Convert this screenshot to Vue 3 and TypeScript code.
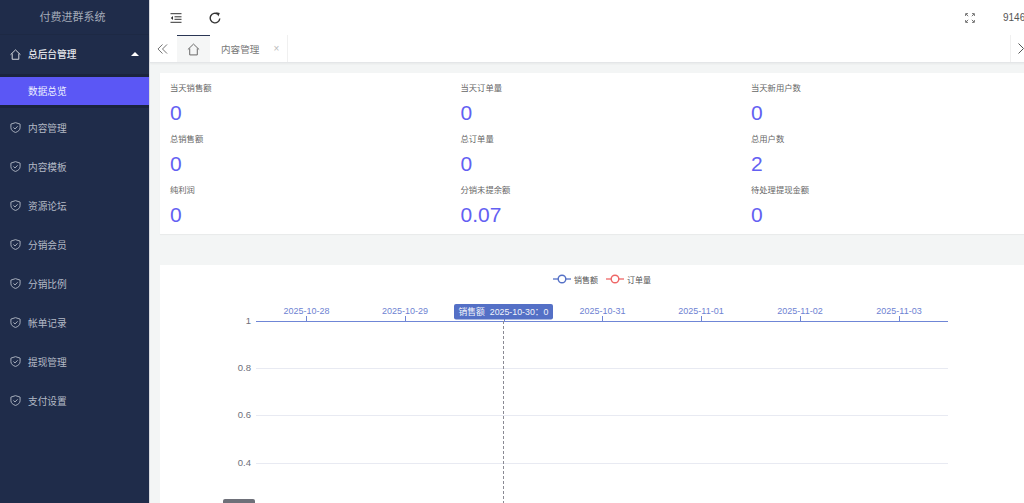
<script setup lang="ts">
interface Stat { label: string; value: string }
const menus: string[] = ['内容管理', '内容模板', '资源论坛', '分销会员', '分销比例', '帐单记录', '提现管理', '支付设置']
const stats: Stat[] = [
  { label: '当天销售额', value: '0' }, { label: '当天订单量', value: '0' }, { label: '当天新用户数', value: '0' },
  { label: '总销售额', value: '0' }, { label: '总订单量', value: '0' }, { label: '总用户数', value: '2' },
  { label: '纯利润', value: '0' }, { label: '分销未提余额', value: '0.07' }, { label: '待处理提现金额', value: '0' }
]
const dates: { x: number; t: string }[] = [
  { x: 146.5, t: '2025-10-28' }, { x: 245, t: '2025-10-29' }, { x: 442.5, t: '2025-10-31' },
  { x: 541, t: '2025-11-01' }, { x: 640, t: '2025-11-02' }, { x: 739, t: '2025-11-03' }
]
const ticks: number[] = [146.5, 245.5, 344.5, 442.5, 541.5, 640.5, 739.5]
const yAxis: { y: number; t: string }[] = [
  { y: 103.5, t: '0.8' }, { y: 150.5, t: '0.6' }, { y: 198.5, t: '0.4' }
]
</script>

<template>
  <div class="app">
    <aside class="side">
      <div class="logo">付费进群系统</div>
      <div class="group">
        <svg class="ico" viewBox="0 0 12 12"><path d="M.6 6.200 6 1 11.400 6.200M2.400 5v6.200h7.200V5" /></svg>
        <span>总后台管理</span>
        <i class="caret"></i>
      </div>
      <div class="subwrap"><div class="sub">数据总览</div></div>
      <div v-for="m in menus" :key="m" class="item">
        <svg class="ico" viewBox="0 0 12 12"><path d="M6 .7 11 2.300v3.900c0 2.600-2.200 4.300-5 5.200C3.200 10.500 1 8.800 1 6.200V2.300Z" /><path d="M3.800 6 5.500 7.600 8.300 4.700" /></svg>
        <span>{{ m }}</span>
      </div>
    </aside>
    <main class="main">
      <header class="top">
        <svg class="hicon first" viewBox="0 0 12 10"><path d="M.5 .7h11M4.500 3.800h7M4.500 6.300h7M.5 9.300h11" /><path d="M3 3 .8 5 3 7Z" class="fill" /></svg>
        <svg class="hicon second" viewBox="0 0 12 12"><path d="M10.800 6.500A4.800 4.800 0 1 1 8.900 2.200" /><path d="M7.200 .2 10.800 1 9.400 4.500Z" class="fill" /></svg>
        <svg class="hicon third" viewBox="0 0 10 10"><path d="M.6 3V.6H3M7 .6h2.400V3M.6 7v2.400H3M7 9.400h2.400V7M1 1l2.200 2.200M9 1 6.800 3.200M1 9l2.200-2.200M9 9 6.800 6.800" /></svg>
        <span class="num">9146</span>
      </header>
      <nav class="tabs">
        <svg class="dbl" viewBox="0 0 12 11"><path d="M6 .5 1 5.500 6 10.500M11 .5 6 5.500 11 10.500" /></svg>
        <div class="home">
          <svg class="homeico" viewBox="0 0 12 12"><path d="M.8 6 6 1 11.200 6M2.500 5v6h7V5" /></svg>
        </div>
        <div class="tab"><span>内容管理</span><em>×</em></div>
        <div class="tail">
          <svg class="chev" viewBox="0 0 6 11"><path d="M.5 .5 5.500 5.500 .5 10.500" /></svg>
        </div>
      </nav>
      <section class="content">
        <div class="card stats">
          <div v-for="s in stats" :key="s.label" class="stat">
            <div class="lab">{{ s.label }}</div>
            <div class="val">{{ s.value }}</div>
          </div>
        </div>
        <div class="card chart">
          <div class="legend">
            <svg class="lg" viewBox="0 0 18 10"><path d="M0 5h18" stroke="#5470c6" stroke-width="1.300" /><circle cx="9" cy="5" r="3.800" stroke="#5470c6" fill="#fff" stroke-width="1.400" /></svg>
            <span>销售额</span>
            <svg class="lg" viewBox="0 0 18 10"><path d="M0 5h18" stroke="#ee6666" stroke-width="1.300" /><circle cx="9" cy="5" r="3.800" stroke="#ee6666" fill="#fff" stroke-width="1.400" /></svg>
            <span>订单量</span>
          </div>
          <svg class="plot" width="875" height="238" viewBox="0 0 875 238">
            <line v-for="g in yAxis" :key="g.t" x1="96" x2="788" :y1="g.y" :y2="g.y" stroke="#e8eaf2" />
            <line x1="96" x2="788" y1="56.500" y2="56.500" stroke="#6f86d6" />
            <line v-for="t in ticks" :key="t" :x1="t" :x2="t" y1="51" y2="56" stroke="#6f86d6" />
            <text v-for="d in dates" :key="d.t" :x="d.x" y="49" text-anchor="middle" class="dt">{{ d.t }}</text>
            <text x="91" y="58.500" text-anchor="end" class="yl">1</text>
            <text v-for="g in yAxis" :key="g.t" x="91" :y="g.y + 2.500" text-anchor="end" class="yl">{{ g.t }}</text>
            <line x1="343.500" x2="343.500" y1="56" y2="238" stroke="#8a8a94" stroke-dasharray="3 2" />
            <rect x="294" y="39" width="99" height="15.500" rx="2" fill="#5470c6" />
            <text x="343.500" y="50" text-anchor="middle" class="tip">销售额&#160;&#160;2025-10-30：0</text>
            <rect x="63" y="234" width="32" height="10" rx="2" fill="#6e7079" />
          </svg>
        </div>
      </section>
    </main>
  </div>
</template>

<style>
html, body { margin: 0; height: 100%; overflow: hidden; background: #f3f5f5; }
</style>

<style scoped>
.app {
  display: flex;
  width: 1024px;
  height: 503px;
  overflow: hidden;
  font-family: "Liberation Sans", "Noto Sans CJK SC", sans-serif;
}
.side {
  flex: 0 0 149px;
  background: #1f2c4a;
  color: #b4bac6;
  border-right: 1px solid #d9dbdf;
}
.logo {
  height: 35px;
  line-height: 34px;
  padding-right: 4px;
  text-align: center;
  font-size: 11px;
  color: #a4abb9;
  border-bottom: 1px solid #1d2944;
  box-sizing: border-box;
}
.group, .item {
  display: flex;
  align-items: center;
  height: 39px;
  padding-left: 10px;
  font-size: 9.7px;
  gap: 7px;
}
.group { color: #e4e6ea; font-weight: 500; padding-bottom: 1px; box-sizing: border-box; }
.ico {
  width: 11px;
  height: 11px;
  fill: none;
  stroke: currentColor;
  stroke-width: 1;
}
.caret {
  margin-left: auto;
  margin-right: 10px;
  border-left: 4px solid transparent;
  border-right: 4px solid transparent;
  border-bottom: 4px solid #fff;
}
.subwrap {
  background: #1a243d;
  padding: 3px 0;
}
.sub {
  height: 28px;
  line-height: 29px;
  padding-left: 28px;
  font-size: 9.7px;
  color: #eef0ff;
  background: #5b57f5;
}
.main { flex: 0 0 885px; display: flex; flex-direction: column; background: #f3f5f5; }
.top {
  height: 35px;
  flex: none;
  background: #fff;
  display: flex;
  align-items: center;
  color: #444;
}
.hicon { fill: none; stroke: #333; stroke-width: 1; }
.hicon .fill { fill: #333; stroke: none; }
.first { width: 12px; height: 10px; margin-left: 20px; }
.second { width: 12px; height: 12px; margin-left: 27px; stroke-width: 1.400; }
.third { width: 10px; height: 10px; margin-left: 744px; stroke: #666; stroke-width: .9; }
.num { margin-left: 28px; font-size: 10px; color: #555; white-space: nowrap; }
.tabs {
  height: 28px;
  flex: none;
  background: #fff;
  display: flex;
  align-items: stretch;
  border-bottom: 1px solid #e4e6e8;
  box-sizing: border-box;
  box-shadow: 0 1px 2px rgba(0, 0, 0, .05);
}
.dbl { width: 11px; height: 10px; margin: 9px 9px 0 7px; fill: none; stroke: #666; stroke-width: 1; }
.home {
  width: 33px;
  background: #f5f6f6;
  border-top: 1px solid #2a3654;
  box-sizing: border-box;
  display: flex;
  align-items: center;
  justify-content: center;
}
.homeico { width: 13px; height: 13px; fill: none; stroke: #666; stroke-width: .9; }
.tab {
  width: 78px;
  box-sizing: border-box;
  padding-left: 11px;
  display: flex;
  align-items: center;
  font-size: 9.6px;
  color: #777;
  border-right: 1px solid #f0f0f0;
}
.tab em { margin-left: 14px; font-style: normal; font-size: 10px; color: #bbb; }
.tail { margin-left: 722px; border-left: 1px solid #f0f0f0; padding-left: 7px; display: flex; align-items: center; }
.chev { width: 6px; height: 11px; fill: none; stroke: #555; stroke-width: 1; flex: none; }
.content { padding: 10px 0 0 10px; }
.card { background: #fff; width: 875px; }
.stats {
  display: grid;
  grid-template-columns: repeat(3, 290.500px);
  grid-auto-rows: 51px;
  padding: 7px 0 0 10px;
  height: 161px;
  box-sizing: border-box;
  box-shadow: 0 1px 1px rgba(0, 0, 0, .04);
}
.lab { font-size: 8.300px; line-height: 16px; color: #666; }
.val { font-size: 21px; line-height: 34px; color: #6360f2; }
.chart { margin-top: 31px; height: 240px; overflow: hidden; position: relative; }
.legend {
  display: flex;
  align-items: center;
  height: 28px;
  padding-left: 393px;
  font-size: 8px;
  color: #555;
}
.lg { width: 18px; height: 10px; margin-right: 3px; }
.legend span { margin-right: 8px; }
.plot { position: absolute; left: 0; top: 0; }
.dt { font-size: 9px; fill: #6e82d2; font-family: "Liberation Sans", sans-serif; }
.yl { font-size: 9.500px; fill: #6e7079; }
.tip { font-size: 8.800px; fill: #f2f4fb; }
</style>
